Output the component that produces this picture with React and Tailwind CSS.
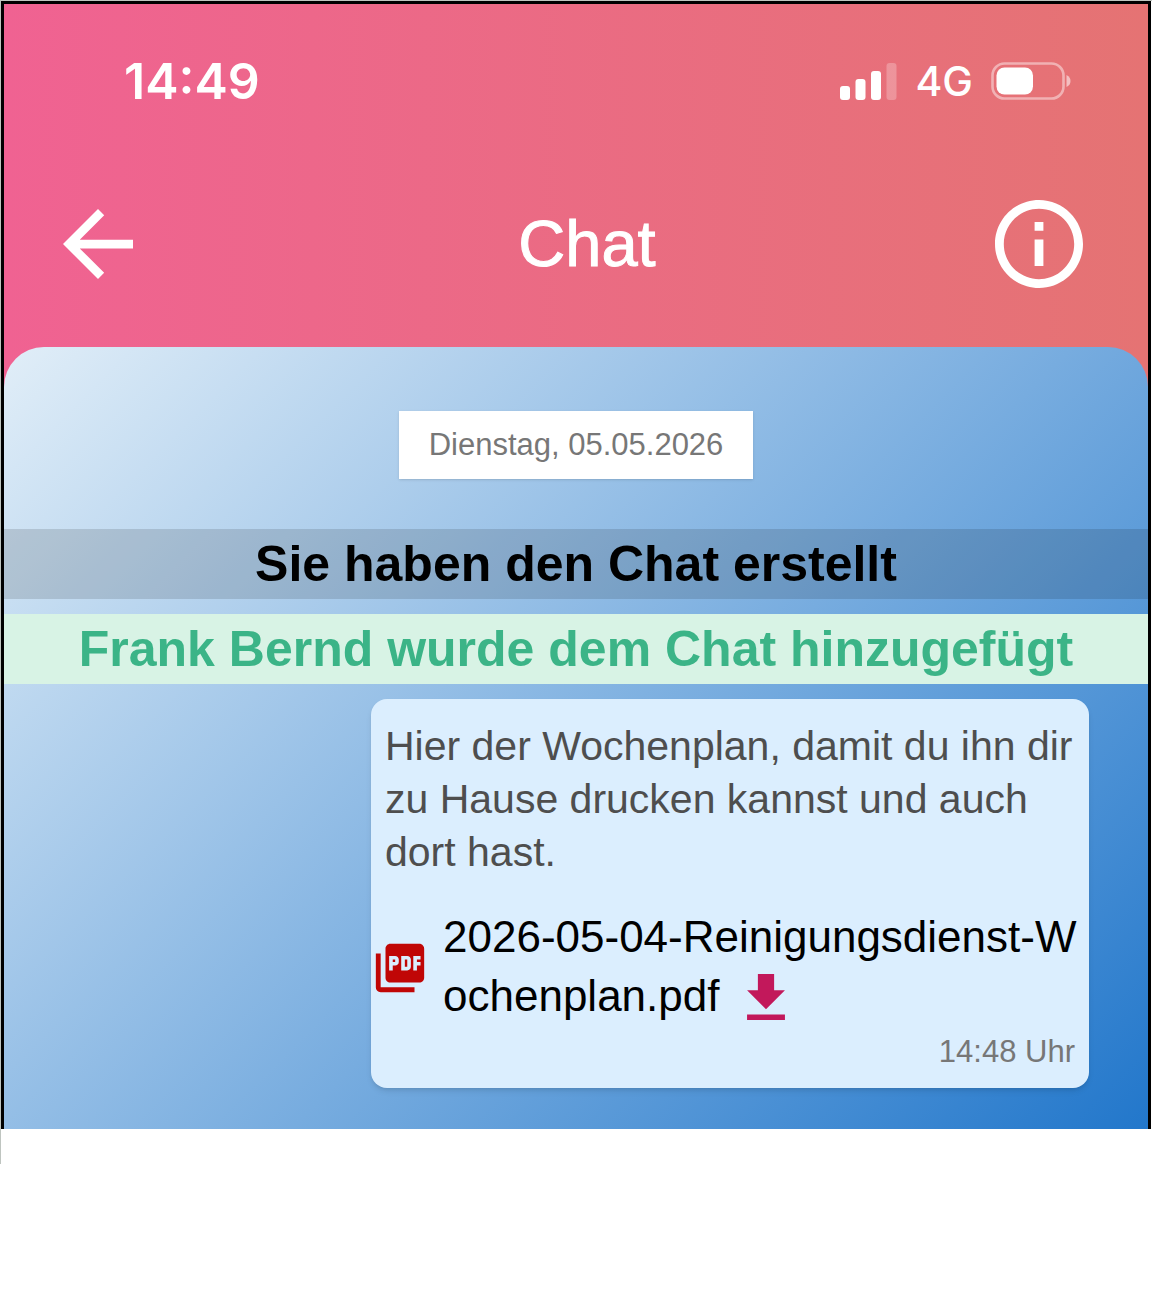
import { MdPictureAsPdf } from "react-icons/md";

function SignalIcon() {
  return (
    <svg viewBox="0 0 57 37" className="h-[37px] w-[57px]" fill="white" aria-hidden>
      <rect x="0" y="23" width="10" height="14" rx="3" />
      <rect x="15.5" y="16" width="10" height="21" rx="3" />
      <rect x="31" y="8" width="10" height="29" rx="3" />
      <rect x="46.500" y="0" width="10" height="37" rx="3" opacity="0.25" />
    </svg>
  );
}

function BatteryIcon() {
  return (
    <svg viewBox="0 0 80 38" className="h-[38px] w-20" fill="white" aria-hidden>
      <rect
        x="1.5"
        y="1.5"
        width="71"
        height="35"
        rx="12"
        fill="none"
        stroke="white"
        strokeWidth="2.6"
        opacity="0.45"
      />
      <rect x="5.5" y="5.5" width="36.500" height="27" rx="8" />
      <path d="M75.500 13c3 1.500 4 3.500 4 6s-1 4.500-4 6z" opacity="0.55" />
    </svg>
  );
}

function StatusBar() {
  return (
    <div className="flex h-[60px] items-center justify-between pr-[77px] pl-[120px] font-['Inter',sans-serif] text-white">
      <span className="text-[50px] leading-[60px] font-semibold">14:49</span>
      <div className="flex items-center">
        <SignalIcon />
        <span className="mx-[18px] text-[41px] leading-[60px] font-medium">4G</span>
        <BatteryIcon />
      </div>
    </div>
  );
}

function Header() {
  return (
    <header className="mt-[88px] flex items-center pr-[65px] pl-[59px] text-white">
      <button type="button" aria-label="Zurück" className="w-[116px]">
        <svg viewBox="4 4 16 16" className="size-[70px]" fill="currentColor">
          <path d="M20 11H7.830l5.590-5.590L12 4l-8 8 8 8 1.410-1.410L7.830 13H20v-2z" />
        </svg>
      </button>
      <h1 className="flex-1 text-center text-[65px] leading-[90px] [-webkit-text-stroke:1px_white]">
        Chat
      </h1>
      <button type="button" aria-label="Info">
        <svg viewBox="2 2 20 20" className="size-[88px]" fill="currentColor">
          <path d="M11 7h2v2h-2zm0 4h2v6h-2zm1-9C6.480 2 2 6.480 2 12s4.480 10 10 10 10-4.480 10-10S17.520 2 12 2zm0 18c-4.410 0-8-3.590-8-8s3.590-8 8-8 8 3.590 8 8-3.590 8-8 8z" />
        </svg>
      </button>
    </header>
  );
}

function Message() {
  return (
    <article className="mt-[15px] mr-[59px] ml-auto w-[718px] max-w-full rounded-2xl bg-[#dbeefe] pt-[21px] pb-[18px] shadow-md">
      <p className="px-[14px] text-[41px] leading-[53px] text-[#4e4e4e]">
        Hier der Wochenplan, damit du ihn dir zu Hause drucken kannst und auch dort hast.
      </p>

      <div className="mt-7 flex items-center gap-[14px] pr-1">
        <MdPictureAsPdf className="mt-1 size-[58px] shrink-0 text-[#c00606]" />
        <a href="#download" className="min-w-0 text-[44px] leading-[59px] break-all text-black">
          2026-05-04-Reinigungsdienst-Wochenplan.pdf
          <svg
            viewBox="5 3 14 17"
            className="ml-7 inline-block h-[46px] w-[38px] align-text-bottom text-[#c2185b]"
            fill="currentColor"
            aria-hidden
          >
            <path d="M19 9h-4V3H9v6H5l7 7 7-7zM5 18v2h14v-2H5z" />
          </svg>
        </a>
      </div>

      <time className="mt-[9px] block pr-[14px] text-right text-[31px] leading-9 text-[#777]">
        14:48 Uhr
      </time>
    </article>
  );
}

export default function App() {
  return (
    <div className="bg-white font-['Liberation_Sans',Arial,sans-serif]">
      <div className="border-t border-l border-[#bfc5c0] pb-[35px]">
        <div className="mr-px border-3 border-b-0 border-black bg-linear-to-r from-[#f06292] to-[#e57373] pt-[47px]">
          <StatusBar />
          <Header />

          <main className="mt-[58px] rounded-t-[40px] bg-[linear-gradient(135deg,#e1eef8,#2277cb)] pt-16 pb-[41px]">
            <div className="mx-auto w-fit bg-white px-[30px] text-[31px] leading-[68px] text-[#777] shadow-sm">
              Dienstag, 05.05.2026
            </div>
            <p className="mt-[50px] bg-black/13 text-center text-[50px] leading-[70px] font-bold text-black">
              Sie haben den Chat erstellt
            </p>
            <p className="mt-[15px] bg-[#d8f3e5] text-center text-[50px] leading-[70px] font-bold text-[#3bb487]">
              Frank Bernd wurde dem Chat hinzugefügt
            </p>
            <Message />
          </main>
        </div>
      </div>
    </div>
  );
}
